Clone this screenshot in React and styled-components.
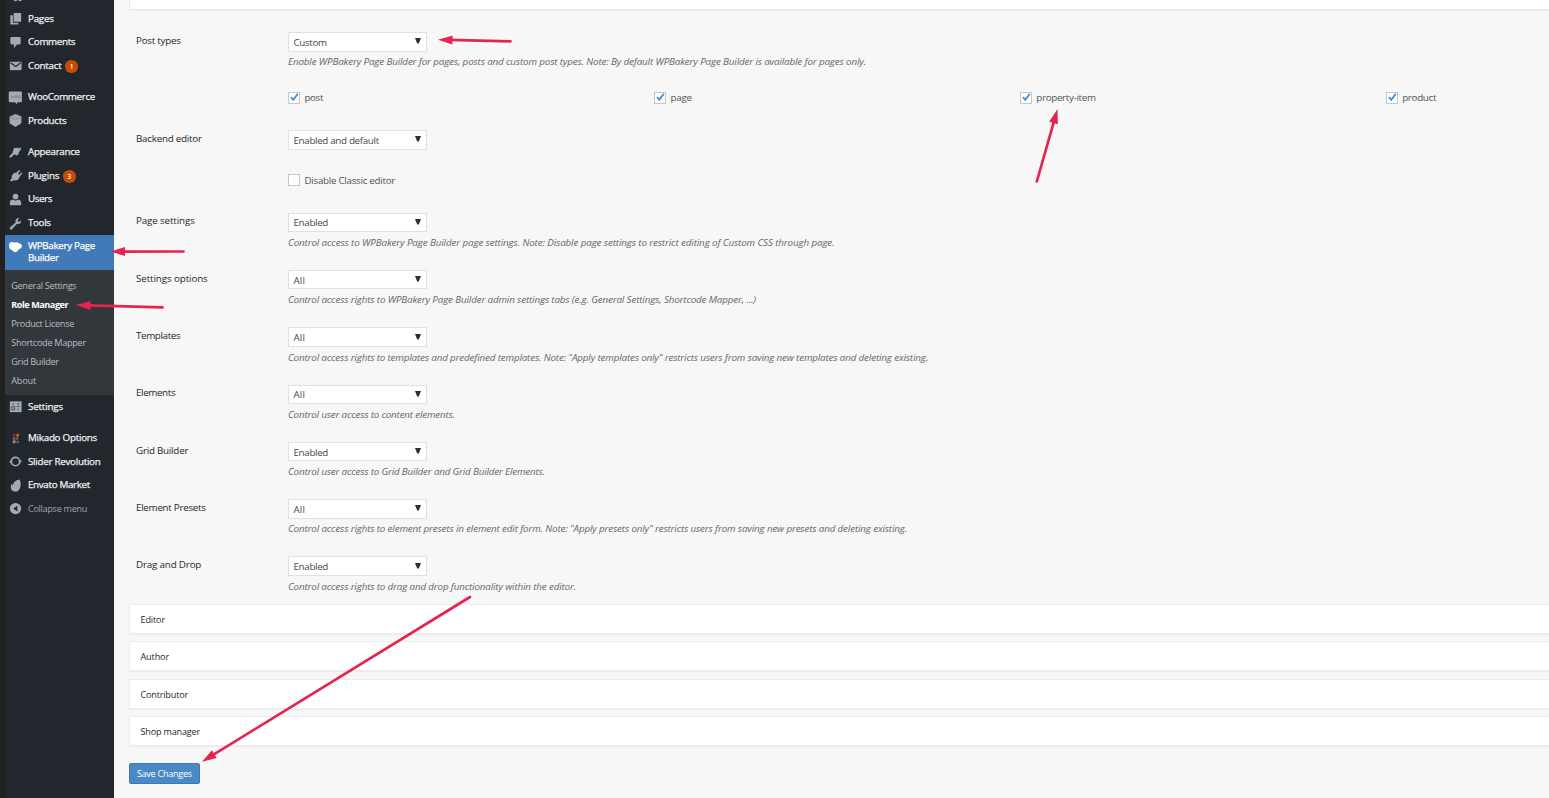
import React, { useState } from "react";
import styled, { createGlobalStyle, css } from "styled-components";

const GlobalStyle = createGlobalStyle`
  * { box-sizing: border-box; }
  body {
    margin: 0;
    background: #f7f7f7;
    font-family: "Open Sans", "Noto Sans", sans-serif;
    overflow: hidden;
  }
`;

const Page = styled.div`
  position: relative;
  display: flex;
  width: 100%;
  height: 798px;
  overflow: hidden;
`;

const Sidebar = styled.nav`
  flex: none;
  width: 114px;
  height: 798px;
  background: #22272d;
  border-left: 5px solid #212121;
  overflow: hidden;
`;

const ScrolledIcon = styled.svg`
  display: block;
  width: 15px;
  height: 6.8px;
  margin-left: 6px;
  fill: #a5aaaf;
`;

const MenuItem = styled.div`
  display: flex;
  align-items: center;
  height: 23.65px;
  margin-top: ${(p) => (p.$gap ? "7.7px" : "0")};
  padding-left: 3px;
  color: ${(p) => (p.$dim ? "#a0a5aa" : "#f0f1f2")};
`;

const MenuIcon = styled.svg`
  flex: none;
  width: 15px;
  height: 15px;
  margin-right: 5px;
  fill: #a5aaaf;
`;

const MenuText = styled.span`
  font-size: ${(p) => (p.$small ? "9.1px" : "9.8px")};
  line-height: 12px;
  letter-spacing: ${(p) => p.$ls ?? -0.28}px;
  white-space: nowrap;
  ${(p) => !p.$small && css`-webkit-text-stroke: 0.25px currentColor;`}
`;

const Badge = styled.span`
  display: flex;
  align-items: center;
  justify-content: center;
  width: 12.4px;
  height: 12.4px;
  margin: 1px 0 0 4px;
  border-radius: 50%;
  background: #c84b05;
  color: #fff;
  font-size: 6.5px;
  font-weight: 600;
`;

const ActiveItem = styled.div`
  display: flex;
  height: 35px;
  padding: 5.5px 0 0 3px;
  background: #4279b8;
  color: #fff;
`;

const SubMenu = styled.div`
  height: 125px;
  padding: 6.2px 0 0 6.2px;
  background: #32373c;
`;

const SubItem = styled.div`
  height: 19.05px;
  line-height: 19.05px;
  font-size: 9.1px;
  font-weight: ${(p) => (p.$current ? 700 : 400)};
  letter-spacing: ${(p) => p.$ls}px;
  color: ${(p) => (p.$current ? "#fff" : "#b9bec4")};
  white-space: nowrap;
`;

const Main = styled.main`
  flex: 1;
  min-width: 0;
  padding-left: 15.4px;
`;

const TopPanel = styled.div`
  height: 10px;
  background: #fff;
  border: 1px solid #e9e9e9;
  border-width: 0 0 1px 1px;
  box-shadow: 0 1px 1px rgba(0, 0, 0, 0.03);
`;

const Settings = styled.section`
  height: 593.8px;
  padding: 22.2px 0 0 6.6px;
`;

const Row = styled.div`
  display: flex;
  align-items: flex-start;
  height: ${(p) => p.$height || 57.3}px;
`;

const Label = styled.div`
  flex: none;
  width: 152px;
  padding-top: 0.8px;
  font-size: 9.8px;
  line-height: 16px;
  letter-spacing: ${(p) => p.$ls}px;
  color: #24282c;
`;

const Field = styled.div`
  flex: 1;
  min-width: 0;
`;

const Select = styled.div`
  display: flex;
  align-items: center;
  justify-content: space-between;
  width: 139px;
  height: 19.5px;
  padding: 1px 4.5px 0 4.5px;
  background: #fff;
  border: 1px solid #e0e0e0;
  font-size: 9.8px;
  letter-spacing: ${(p) => p.$ls}px;
  color: #44484c;
`;

const Caret = styled.svg`
  width: 6px;
  height: 6px;
  margin-top: -2px;
  fill: #2b3035;
`;

const Description = styled.p`
  margin: 2.8px 0 0;
  font-size: 9.8px;
  font-style: italic;
  line-height: 16px;
  letter-spacing: ${(p) => p.$ls}px;
  color: #666;
  white-space: nowrap;
`;

const CheckGrid = styled.div`
  display: grid;
  grid-template-columns: repeat(4, 365.9px);
  margin-top: ${(p) => p.$top}px;
`;

const CheckLabel = styled.label`
  display: flex;
  align-items: center;
  height: 16px;
  font-size: 9.8px;
  letter-spacing: ${(p) => p.$ls}px;
  color: #505458;
`;

const CheckBox = styled.span`
  display: flex;
  width: 12px;
  height: 12px;
  margin-right: 4.5px;
  background: #fff;
  border: 1px solid #c4c8cc;

  svg {
    width: 10px;
    height: 10px;
    overflow: visible;
  }
`;

const RolePanel = styled.div`
  height: 30px;
  margin-bottom: 7.55px;
  padding-left: 10.1px;
  background: #fff;
  border: 1px solid #ededed;
  border-right: 0;
  box-shadow: 0 1px 1px rgba(0, 0, 0, 0.04);
  font-size: 9.1px;
  line-height: 29px;
  letter-spacing: ${(p) => p.$ls}px;
  color: #24282c;
`;

const SaveButton = styled.button`
  display: block;
  width: 71px;
  height: 20.5px;
  margin-top: 17px;
  padding: 0 1px 0 0;
  background: #4a89c6;
  border: 1px solid #3d78b3;
  border-radius: 2px;
  font-family: inherit;
  font-size: 9.1px;
  letter-spacing: -0.28px;
  color: #fff;
`;

const Arrows = styled.svg`
  position: absolute;
  top: 0;
  left: 0;
  pointer-events: none;
`;

const icons = {
  pages: <path d="M6 2h8v9.500h-8zM2.500 4.500h2.700v8h5.800v2h-8.500z" />,
  comments: <path d="M4 2h8q1.500 0 1.500 1.500v5q0 1.500-1.500 1.500h-2.500l-3.200 4v-4h-2.300q-1.500 0-1.500-1.500v-5q0-1.500 1.500-1.500z" />,
  contact: (
    <>
      <path d="M2 4h12.500v9h-12.500z" />
      <path d="M2.800 5l5.400 4 5.400-4" fill="none" stroke="#22272d" strokeWidth="1.200" />
    </>
  ),
  woo: (
    <>
      <path d="M2 1.500h11.500q1.300 0 1.300 1v9.500q0 1-1 1h-3.500l-1 1.800-2-1.800h-5.500q-1 0-1-1v-9.500q0-1 1.200-1z" />
      <path d="M3 6l1 2.500 1-2 1 2 1-2.500M8 6.300h2v2h-2zM11 6.300h2v2h-2z" fill="none" stroke="#7c8288" strokeWidth=".8" />
    </>
  ),
  products: (
    <>
      <path d="M8 1l6.300 2.800v7.200l-6.300 3.800-6.300-3.800v-7.200z" />
      <path d="M2.500 4.500l5.500 2.700 5.500-2.700M5 2.900l5.700 2.700" fill="none" stroke="#7c8288" strokeWidth=".7" />
    </>
  ),
  appearance: <path d="M6.500 2.800l2 .6 1.300-1 1.500 1.300 3-1.200-1 3.200-2 2.300.3 1.700-2.300 1.500-2.300-1.300-4.500 4-1.300-1.500 3.500-3.800z" />,
  plugins: <path d="M8.700 5l3.200-3 1.200 1-2.600 3 1.300 1.200 2.700-2.400.9.900-2.700 3q-1.200 4.500-5.300 4.500l-1-.2-3 1.500-1.300-1.300 1.800-2q-.5-3.500 2.500-5.900z" />,
  users: (
    <>
      <circle cx="8" cy="4.800" r="3" />
      <path d="M2 14v-2.500q0-3 3-3.500l3 1.300 3-1.300q3 .5 3 3.500v2.500z" />
    </>
  ),
  tools: <path d="M14 4.500q.3 3-2.200 3.900-1.200.2-2.200-.2l-5.300 6q-1 .8-2 0t0-2.100l5.800-5.300q-.7-2.100.7-3.600 1.300-1.300 3.300-.9l-1.900 2.100.4 1.500 1.600.3z" />,
  bakery: <path d="M1 5.500q0-3.300 3.500-3.500 1.800 0 2.600.8 1-.6 2.500-.3 1.300.2 1.700 1 3.200.2 3.500 2.800-.2 3-3.300 3.400-.5 2.700-3 3.200-2.700.3-3.800-2-3.500-.4-3.700-5.400z" fill="#fff" />,
  settings: (
    <>
      <path d="M2 2.500h12.500v11.500h-12.500z" />
      <path d="M5.500 4.500v2M4 8.300h3v3.200h-3zM10.800 4v2.500M9.300 8h3M10.800 10v2" fill="none" stroke="#4a5057" strokeWidth="1.100" />
    </>
  ),
  mikado: (
    <>
      <path d="M5 3h3v3h-3z" fill="#9b2230" />
      <path d="M9 3h2.500v3h-2.500z" fill="#b87821" />
      <path d="M5 6.500h3v3h-3z" fill="#6650a8" />
      <path d="M8.500 6.500h2.500v3h-2.500z" fill="#b33a20" />
      <path d="M5 10h3v3h-3z" fill="#b8941f" />
      <path d="M9 10.500h2.500v2.500h-2.500z" fill="#347a91" />
    </>
  ),
  slider: (
    <>
      <circle cx="8" cy="8" r="4.500" fill="none" stroke="#a5aaaf" strokeWidth="1.800" />
      <path d="M1.200 8.500l2.800-3v4.500zM14.800 7.500l-2.800-2v5z" />
    </>
  ),
  envato: <path d="M12.300 1.700q2.300 4 .5 9-1.700 4.300-5.500 3.800-4.800-.7-4.300-6 .3-2.200 1.500-2.700l.5 3q.5-6 7.300-7.100z" />,
  collapse: (
    <>
      <circle cx="8" cy="7" r="6" />
      <path d="M10 4v6l-4.500-3z" fill="#22272d" />
    </>
  ),
};

const Icon = ({ name }) => <MenuIcon viewBox="0 0 16 16">{icons[name]}</MenuIcon>;

const menuTop = [
  { icon: "pages", text: "Pages", ls: -0.25 },
  { icon: "comments", text: "Comments", ls: -0.34 },
  { icon: "contact", text: "Contact", ls: -0.25, badge: 1 },
  { icon: "woo", text: "WooCommerce", gap: true, ls: -0.35 },
  { icon: "products", text: "Products", ls: -0.3 },
  { icon: "appearance", text: "Appearance", gap: true, ls: -0.3 },
  { icon: "plugins", text: "Plugins", ls: -0.25, badge: 3 },
  { icon: "users", text: "Users", ls: -0.4 },
  { icon: "tools", text: "Tools", ls: -0.34 },
];

const subMenu = [
  { text: "General Settings", ls: -0.27 },
  { text: "Role Manager", ls: -0.44, current: true },
  { text: "Product License", ls: -0.3 },
  { text: "Shortcode Mapper", ls: -0.27 },
  { text: "Grid Builder", ls: -0.29 },
  { text: "About", ls: -0.12 },
];

const menuBottom = [
  { icon: "settings", text: "Settings", ls: -0.18 },
  { icon: "mikado", text: "Mikado Options", gap: true, ls: -0.25 },
  { icon: "slider", text: "Slider Revolution", ls: -0.27 },
  { icon: "envato", text: "Envato Market", ls: -0.33 },
  { icon: "collapse", text: "Collapse menu", ls: -0.3, dim: true },
];

const postTypes = [
  { text: "post", ls: -0.38 },
  { text: "page", ls: -0.19 },
  { text: "property-item", ls: -0.306 },
  { text: "product", ls: -0.297 },
];

const rows = [
  { label: "Page settings", ls: -0.125, value: "Enabled", text: "Control access to WPBakery Page Builder page settings. Note: Disable page settings to restrict editing of Custom CSS through page.", textLs: -0.115 },
  { label: "Settings options", ls: -0.1, value: "All", text: "Control access rights to WPBakery Page Builder admin settings tabs (e.g. General Settings, Shortcode Mapper, ...)", textLs: -0.14 },
  { label: "Templates", ls: -0.371, value: "All", text: 'Control access rights to templates and predefined templates. Note: "Apply templates only" restricts users from saving new templates and deleting existing.', textLs: -0.146 },
  { label: "Elements", ls: -0.37, value: "All", text: "Control user access to content elements.", textLs: -0.166 },
  { label: "Grid Builder", ls: -0.227, value: "Enabled", text: "Control user access to Grid Builder and Grid Builder Elements.", textLs: -0.167 },
  { label: "Element Presets", ls: -0.271, value: "All", text: 'Control access rights to element presets in element edit form. Note: "Apply presets only" restricts users from saving new presets and deleting existing.', textLs: -0.143 },
  { label: "Drag and Drop", ls: -0.17, value: "Enabled", text: "Control access rights to drag and drop functionality within the editor.", textLs: -0.146 },
];

const roles = [
  { text: "Editor", ls: -0.14 },
  { text: "Author", ls: -0.139 },
  { text: "Contributor", ls: -0.191 },
  { text: "Shop manager", ls: -0.194 },
];

// from the tail (x1, y1) to the tip (x2, y2)
const arrows = [
  [510.5, 41.3, 438, 39.7],
  [183.5, 251.5, 110.5, 251.6],
  [162.5, 307.4, 76, 305],
  [1036.8, 181.5, 1057.5, 109],
  [470, 597, 202, 761.7],
];

const Arrow = ({ points: [x1, y1, x2, y2] }) => {
  const length = Math.hypot(x2 - x1, y2 - y1);
  const angle = (Math.atan2(y2 - y1, x2 - x1) * 180) / Math.PI;
  return (
    <g transform={`translate(${x1} ${y1}) rotate(${angle})`} fill="#e52450">
      <path d={`M0 0H${length - 12}`} stroke="#e52450" strokeWidth="2.7" strokeLinecap="round" />
      <path d={`M${length} 0l-14.500 -4.500v9z`} />
    </g>
  );
};

const MenuRow = ({ item }) => (
  <MenuItem $gap={item.gap} $dim={item.dim}>
    <Icon name={item.icon} />
    <MenuText $ls={item.ls} $small={item.dim}>{item.text}</MenuText>
    {item.badge && <Badge>{item.badge}</Badge>}
  </MenuItem>
);

const Dropdown = ({ value }) => {
  const ls = value === "All" ? 0.12 : -0.33;
  return (
    <Select $ls={ls}>
      {value}
      <Caret viewBox="0 0 6 6"><path d="M0 0h6l-2.200 5.500h-1.600z" /></Caret>
    </Select>
  );
};

const Check = ({ text, ls, checked, onChange }) => (
  <CheckLabel $ls={ls} onClick={onChange}>
    <CheckBox>
      {checked && (
        <svg viewBox="0 0 10 10">
          <path d="M2 4.200l2.300 2.600 4.500-6" fill="none" stroke="#4a8fd0" strokeWidth="1.900" />
        </svg>
      )}
    </CheckBox>
    {text}
  </CheckLabel>
);

const App = () => {
  const [checked, setChecked] = useState(["post", "page", "property-item", "product"]);

  const toggle = (name) => {
    setChecked(checked.includes(name) ? checked.filter((c) => c !== name) : [...checked, name]);
  };

  return (
    <>
      <GlobalStyle />
      <Page>
        <Sidebar>
          <ScrolledIcon viewBox="0 0 15 6.800">
            <circle cx="4.500" cy="-.5" r="1.800" />
            <circle cx="9" cy="-.5" r="1.800" />
          </ScrolledIcon>
          {menuTop.map((item) => <MenuRow key={item.text} item={item} />)}
          <ActiveItem>
            <Icon name="bakery" />
            <MenuText $ls={-0.31}>WPBakery Page<br />Builder</MenuText>
          </ActiveItem>
          <SubMenu>
            {subMenu.map((item) => (
              <SubItem key={item.text} $current={item.current} $ls={item.ls}>{item.text}</SubItem>
            ))}
          </SubMenu>
          {menuBottom.map((item) => <MenuRow key={item.text} item={item} />)}
        </Sidebar>

        <Main>
          <TopPanel />
          <Settings>
            <Row $height={98}>
              <Label $ls={-0.236}>Post types</Label>
              <Field>
                <Dropdown value="Custom" />
                <Description $ls={-0.136}>
                  Enable WPBakery Page Builder for pages, posts and custom post types. Note: By default WPBakery Page Builder is available for pages only.
                </Description>
                <CheckGrid $top={19.3}>
                  {postTypes.map((type) => (
                    <Check
                      key={type.text}
                      text={type.text}
                      ls={type.ls}
                      checked={checked.includes(type.text)}
                      onChange={() => toggle(type.text)}
                    />
                  ))}
                </CheckGrid>
              </Field>
            </Row>
            <Row $height={82.5}>
              <Label $ls={-0.237}>Backend editor</Label>
              <Field>
                <Dropdown value="Enabled and default" />
                <CheckGrid $top={22.6}>
                  <Check
                    text="Disable Classic editor"
                    ls={-0.282}
                    checked={checked.includes("classic")}
                    onChange={() => toggle("classic")}
                  />
                </CheckGrid>
              </Field>
            </Row>
            {rows.map((row) => (
              <Row key={row.label}>
                <Label $ls={row.ls}>{row.label}</Label>
                <Field>
                  <Dropdown value={row.value} />
                  <Description $ls={row.textLs}>{row.text}</Description>
                </Field>
              </Row>
            ))}
          </Settings>
          {roles.map((role) => <RolePanel key={role.text} $ls={role.ls}>{role.text}</RolePanel>)}
          <SaveButton>Save Changes</SaveButton>
        </Main>

        <Arrows width="1549" height="798" viewBox="0 0 1549 798">
          {arrows.map((points) => <Arrow key={points.join()} points={points} />)}
        </Arrows>
      </Page>
    </>
  );
};

export default App;
